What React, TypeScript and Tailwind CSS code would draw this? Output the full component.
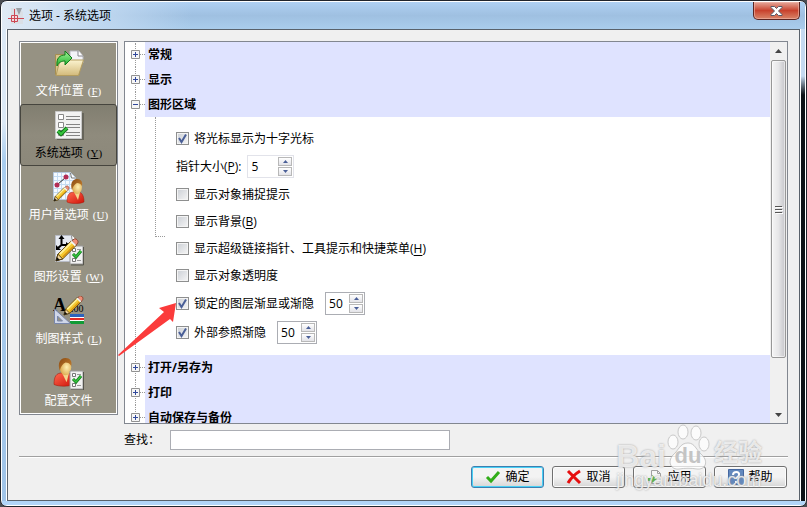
import React, { useState } from 'react';

interface MnemonicProps {
  text: string;
  hotkey?: string;
  suffix?: string;
}

function Mnemonic({ text, hotkey, suffix = '' }: MnemonicProps) {
  return (
    <span>
      {text}
      {hotkey && (
        <>
          (<u className="underline underline-offset-2">{hotkey}</u>)
        </>
      )}
      {suffix}
    </span>
  );
}

/* ---------- Icons ---------- */

function Gradients() {
  return (
    <svg width="0" height="0" className="absolute" aria-hidden="true">
      <defs>
        <linearGradient id="folder" x1="0" y1="0" x2="0" y2="1">
          <stop offset="0" stopColor="#fbf3cf" />
          <stop offset="1" stopColor="#d3ba7a" />
        </linearGradient>
        <linearGradient id="green" x1="0" y1="0" x2="0" y2="1">
          <stop offset="0" stopColor="#a4f59a" />
          <stop offset="1" stopColor="#1cae2a" />
        </linearGradient>
        <radialGradient id="face" cx="0.6" cy="0.5" r="0.6">
          <stop offset="0" stopColor="#fff0b4" />
          <stop offset="1" stopColor="#d9a548" />
        </radialGradient>
        <linearGradient id="hair" x1="0" y1="0" x2="1" y2="1">
          <stop offset="0" stopColor="#8a4a12" />
          <stop offset="1" stopColor="#c98632" />
        </linearGradient>
        <linearGradient id="shirt" x1="0" y1="0" x2="1" y2="1">
          <stop offset="0" stopColor="#ff6a50" />
          <stop offset="1" stopColor="#cf1208" />
        </linearGradient>
      </defs>
    </svg>
  );
}

function Sheet({ x, y }: { x: number; y: number }) {
  return (
    <g transform={`translate(${x} ${y})`}>
      <path d="M0 0h13v18H0z" fill="#f1f1f1" stroke="#9a9a9a" />
      <path d="M13.500 1v18H1" fill="none" stroke="#55544c" />
      <path d="M2.500 2.500h3v3h-3zM2.500 12.500h3v3h-3z" fill="#fff" stroke="#777" />
      <path d="M7 3.500h4M7 14.500h4" stroke="#999" />
      <path d="m3 8 3 3 5-6" fill="none" stroke="#137b20" strokeWidth="3" />
      <path d="m3 8 3 3 5-6" fill="none" stroke="#35c43c" strokeWidth="1.500" />
    </g>
  );
}

function Pencil({ x, y, scale = 1 }: { x: number; y: number; scale?: number }) {
  return (
    <g transform={`translate(${x} ${y}) scale(${scale})`}>
      <path d="M0 23 2 16 16 2l5 5L7 21Z" fill="#f5ca32" stroke="#4f3908" />
      <path d="M4 16 17 3" stroke="#fff09a" strokeWidth="2" />
      <path d="M7 19 19 7" stroke="#d9920f" strokeWidth="1.500" />
      <path d="m0 23 2-7 5 5Z" fill="#f1d5a0" stroke="#4f3908" />
      <path d="m0 23 1-4 3 3Z" fill="#111" />
      <path d="m17 2 2-2c2-1 5 2 4 4l-2 3Z" fill="#ef8f78" stroke="#87402b" />
      <path d="m15 3 5 5 1-2-4-4Z" fill="#f4f4f4" />
    </g>
  );
}

function Person({ x, y, scale = 1 }: { x: number; y: number; scale?: number }) {
  return (
    <g transform={`translate(${x} ${y}) scale(${scale})`}>
      <path d="M0 23c0-7 2-10 7-10h4c4 0 6 4 6 10-4 2-13 2-17 0Z" fill="url(#shirt)" stroke="#a31b0d" strokeWidth="0.5" />
      <path d="m7 13 4 8 2-8Z" fill="#f3d58c" />
      <ellipse cx="10" cy="8" rx="5" ry="7" fill="url(#face)" />
      <path d="M5 11C3 5 5 0 10 0c4 0 6 3 5 7-1-2-3-3-5-3-2 1-4 3-5 7Z" fill="url(#hair)" />
    </g>
  );
}

function FolderIcon() {
  return (
    <svg width="32" height="32" viewBox="0 0 32 32" aria-hidden="true">
      <path d="M2.500 6.500h8l2 2h14v18h-24Z" fill="#d8c48b" stroke="#a58e51" />
      <path d="M17 3h9l4 5v7H17Z" fill="#f4f4f8" stroke="#b9bac0" />
      <path d="M25 3v5h5" fill="#fff" stroke="#85858c" />
      <path d="M3 27.500 7 12h23.500l-5 15.500Z" fill="url(#folder)" stroke="#b39c5e" />
      <path d="M4 18C3 10 7 7 12 7V3l7 7-7 7v-4c-3 0-6 1-8 5Z" fill="url(#green)" stroke="#107a1a" />
    </svg>
  );
}

function ListIcon() {
  return (
    <svg width="32" height="32" viewBox="0 0 32 32" aria-hidden="true">
      <path d="M4 3h27v27H4z" fill="#66645a" />
      <path d="M2.500 1.500h26v27h-26z" fill="#f2f2f2" stroke="#c8c8c8" />
      <path d="M5.500 4.500h5v5h-5zM5.500 12.500h5v5h-5zM5.500 20.500h5v5h-5z" fill="#fff" stroke="#888" />
      <path d="M13 6.500h14M13 9.500h14M13 14.500h14M13 17.500h14M13 22.500h14M13 25.500h14" stroke="#858585" />
      <path d="m5 21 3 3 6-6" fill="none" stroke="#10751b" strokeWidth="4" />
      <path d="m5 21 3 3 6-6" fill="none" stroke="#36c43d" strokeWidth="2" />
    </svg>
  );
}

function UserPrefsIcon() {
  return (
    <svg width="32" height="32" viewBox="0 0 32 32" aria-hidden="true">
      <path d="M.5.500h17l5 5v22H.500Z" fill="#f5faff" stroke="#b6c9df" />
      <path d="M4.500 1v26M8.500 1v26M12.500 1v26M16.500 1v26M1 4.500h17M1 8.500h21M1 12.500h21M1 16.500h21M1 20.500h21" stroke="#c3dbf2" />
      <path d="m17.500 1 1 5h4" fill="#fff" stroke="#777" />
      <path d="m4 13 9-8" stroke="#222" />
      <circle cx="4" cy="13" r="2.500" fill="#b32d55" />
      <circle cx="13" cy="5" r="2.500" fill="#b32d55" />
      <Person x={14} y={7} />
      <Pencil x={1} y={14} scale={0.650} />
    </svg>
  );
}

function DrawingIcon() {
  return (
    <svg width="32" height="32" viewBox="0 0 32 32" aria-hidden="true">
      <path d="M2.500 1.500h16l4 4v22h-20Z" fill="#e6eaf2" stroke="#b8bcc6" />
      <path d="m18.500 1.500.5 4h4" fill="#fff" stroke="#888" />
      <path d="M8.500 4v7M8.500 11 5 14M8.500 11H15" fill="none" stroke="#000" strokeWidth="2" />
      <path d="m5.500 5 3-4 3 4ZM3 11v5h5ZM13 8l4 3-4 3Z" />
      <Sheet x={17} y={12} />
      <Pencil x={3} y={5} scale={0.950} />
    </svg>
  );
}

function StyleIcon() {
  return (
    <svg width="32" height="32" viewBox="0 0 32 32" aria-hidden="true">
      <text x="0" y="15" fontFamily="Liberation Serif, serif" fontSize="18" fontWeight="bold">A</text>
      <text x="18" y="16" fontFamily="Liberation Serif, serif" fontSize="10">.00</text>
      <path d="M17 18h14v3H17z" fill="#2d63bb" />
      <path d="M17 21h14v1H17z" fill="#fff" />
      <path d="M17 22h14v2H17z" fill="#e12b24" />
      <path d="M17 24h14v1H17z" fill="#fff" />
      <path d="M17 25h14v3H17z" fill="#119b35" />
      <path d="M1.500 13v14.500h16Z" fill="#d0d7e9" stroke="#7886aa" />
      <path d="M4.500 20v5h5Z" fill="#969283" stroke="#7886aa" />
      <Pencil x={11} y={0} scale={0.820} />
    </svg>
  );
}

function ProfileIcon() {
  return (
    <svg width="32" height="32" viewBox="0 0 32 32" aria-hidden="true">
      <Person x={1} y={0} scale={1.150} />
      <Sheet x={17} y={13} />
    </svg>
  );
}

const CATEGORIES = [
  { label: '文件位置', hotkey: 'F', icon: <FolderIcon /> },
  { label: '系统选项', hotkey: 'Y', icon: <ListIcon /> },
  { label: '用户首选项', hotkey: 'U', icon: <UserPrefsIcon /> },
  { label: '图形设置', hotkey: 'W', icon: <DrawingIcon /> },
  { label: '制图样式', hotkey: 'L', icon: <StyleIcon /> },
  { label: '配置文件', hotkey: '', icon: <ProfileIcon /> },
];

/* ---------- Controls ---------- */

function Checkbox({ id, checked }: { id: string; checked?: boolean }) {
  return (
    <span className="relative flex size-[13px] shrink-0">
      <input
        id={id}
        type="checkbox"
        defaultChecked={checked}
        className="peer size-[13px] appearance-none border border-[#8e8f8f] bg-linear-to-br from-[#cbcfd5] to-[#f6f6f6] shadow-[inset_0_0_0_1px_#f4f4f4]"
      />
      <svg viewBox="0 0 13 13" className="pointer-events-none absolute inset-0 hidden peer-checked:block" aria-hidden="true">
        <path d="m3 6 2.500 4L10 2.500" fill="none" stroke="#4a5f97" strokeWidth="2" />
      </svg>
    </span>
  );
}

function CheckRow({ id, text, hotkey, checked }: { id: string; text: string; hotkey?: string; checked?: boolean }) {
  return (
    <div className="flex h-[27px] items-center gap-[5px]">
      <Checkbox id={id} checked={checked} />
      <label htmlFor={id}><Mnemonic text={text} hotkey={hotkey} /></label>
    </div>
  );
}

function Spinner({ id, initial, wide, label }: { id: string; initial: number; wide?: boolean; label?: string }) {
  const [value, setValue] = useState(initial);
  return (
    <span className={`flex h-[23px] border bg-white p-px ${wide ? 'w-[47px] border-[#e2e3ea]' : 'w-10 border-[#abadb3]'}`}>
      <input
        id={id}
        aria-label={label}
        type="text"
        inputMode="numeric"
        value={value}
        onChange={(e) => setValue(Number(e.target.value) || 0)}
        className="w-full min-w-0 pl-[2px] outline-none"
      />
      <span className="flex w-[14px] shrink-0 flex-col gap-px">
        <button aria-label="+" onClick={() => setValue(value + 1)} className="flex flex-1 items-center justify-center border border-[#b8b8b8] bg-linear-to-b from-white to-[#e3e3e8]">
          <svg width="5" height="3" viewBox="0 0 5 3"><path d="M0 3 2.500 0 5 3Z" fill="#4a5f97" /></svg>
        </button>
        <button aria-label="-" onClick={() => setValue(value - 1)} className="flex flex-1 items-center justify-center border border-[#b8b8b8] bg-linear-to-b from-white to-[#e3e3e8]">
          <svg width="5" height="3" viewBox="0 0 5 3"><path d="M0 0h5L2.500 3Z" fill="#4a5f97" /></svg>
        </button>
      </span>
    </span>
  );
}

function TreeHeader({ title, open, first }: { title: string; open?: boolean; first?: boolean }) {
  return (
    <div className="flex h-[25px] shrink-0">
      <div className="relative w-5 shrink-0">
        <span className={`absolute bottom-0 left-[10px] border-l border-dotted border-[#9a9a9a] ${first ? 'top-px' : 'top-0'}`} />
        <span className="absolute top-3 right-0 left-[10px] border-t border-dotted border-[#9a9a9a]" />
        <button aria-label={title} aria-expanded={!!open} className="absolute top-2 left-[6px] flex size-[9px]">
          <svg width="9" height="9" viewBox="0 0 9 9">
            <path d="M.5.5h8v8h-8z" fill="#f6f6f6" stroke="#919191" />
            <path d={open ? 'M2 4.500h5' : 'M2 4.500h5M4.500 2v5'} stroke="#31489b" />
          </svg>
        </button>
      </div>
      <h2 className="flex flex-1 items-center bg-[#dfe3ff] pl-[3px] font-bold">{title}</h2>
    </div>
  );
}

function ScrollBar() {
  return (
    <div className="flex w-[17px] shrink-0 flex-col bg-[#f0f0f0] px-px">
      <button aria-label="▲" className="flex h-[18px] items-center justify-center">
        <svg width="7" height="4" viewBox="0 0 7 4"><path d="M0 4 3.500 0 7 4Z" fill="#444" /></svg>
      </button>
      <div className="flex flex-[298] items-center justify-center rounded-[2px] border border-[#979797] bg-linear-to-r from-[#f5f5f5] via-[#e6e6e8] to-[#c6c6ca] shadow-[inset_0_0_0_1px_#ffffff88]">
        <svg width="8" height="9" viewBox="0 0 8 9">
          <path d="M0 1.500h7M0 4.500h7M0 7.500h7" stroke="#555" />
          <path d="M1 2.500h7M1 5.500h7M1 8.500h7" stroke="#fff" />
        </svg>
      </div>
      <div className="flex-[48]" />
      <button aria-label="▼" className="flex h-[17px] items-center justify-center">
        <svg width="7" height="4" viewBox="0 0 7 4"><path d="M0 0h7L3.500 4Z" fill="#444" /></svg>
      </button>
    </div>
  );
}

function ActionButton({ label, primary, children }: { label: string; primary?: boolean; children: React.ReactNode }) {
  return (
    <button
      className={`flex h-[22px] w-[73px] items-center justify-center gap-1 rounded-[3px] border bg-linear-to-b from-[#f3f3f3] from-50% to-[#d6d6d6] to-100% ${
        primary ? 'border-[#3c7fb1] shadow-[inset_0_0_0_1px_#48d0f5]' : 'border-[#707070] shadow-[inset_0_0_0_1px_#fcfcfc]'
      }`}
    >
      {children}
      <span>{label}</span>
    </button>
  );
}

function TitleBar() {
  return (
    <header className="flex h-[27px] shrink-0 items-start justify-between bg-linear-to-b from-[#afd0f3] via-[#9fc0e1] to-[#aacdec]">
      <div className="flex h-full w-[190px] items-center gap-[5px] bg-linear-to-r from-[#e0eaf5] via-[#c0d8f0] to-transparent pl-[6px]">
        <svg width="16" height="18" viewBox="0 0 16 18" aria-hidden="true">
          <path d="M3 1h8l4 4v12H3Z" fill="#d9dde2" opacity=".8" />
          <path d="m8 1 3 7 3-7Z" fill="#9b9fa5" />
          <path d="M6.500 2v14M0 11.500h16" stroke="#cd4754" />
          <path d="M3.500 8.500h6v6h-6z" fill="#efdde2" stroke="#cd4754" />
          <path d="M6.500 8v7M3 11.500h7" stroke="#cd4754" />
        </svg>
        <h1>选项 - 系统选项</h1>
      </div>
      <button
        aria-label="关闭"
        className="mr-[5px] flex h-[18px] w-[47px] items-center justify-center rounded-b-[5px] border border-t-0 border-[#5c2522] bg-linear-to-b from-[#e4a79b] from-0% via-[#c8412d] via-50% to-[#d88368] to-100% shadow-[inset_0_0_0_1px_#f2b9ad99]"
      >
        <svg width="13" height="12" viewBox="0 0 13 12">
          <path d="M1 1.500h3.500l2 2 2-2H12v1L8.500 6 12 9.500v1H8.500l-2-2-2 2H1v-1L4.500 6 1 2.500Z" fill="#fff" stroke="#565a68" />
        </svg>
      </button>
    </header>
  );
}

function Watermark() {
  return (
    <div className="pointer-events-none absolute right-[44px] bottom-[16px] flex flex-col text-white/75 [text-shadow:0_0_2px_#999]">
      <div className="flex h-[46px] items-end">
        <span className="font-[Liberation_Sans] text-[32px] leading-7 font-bold">Bai</span>
        <span className="relative flex h-[46px] w-[44px] items-end justify-center">
          <svg width="44" height="46" viewBox="0 0 44 46" className="absolute inset-0" aria-hidden="true">
            <g fill="#fff" fillOpacity=".75" stroke="#aaa" strokeOpacity=".6">
              <ellipse cx="7" cy="18" rx="5" ry="7" />
              <ellipse cx="17" cy="8" rx="5" ry="7" />
              <ellipse cx="30" cy="9" rx="5" ry="7" />
              <ellipse cx="38" cy="20" rx="5" ry="7" />
              <path d="M22 19c7 0 8 7 14 12 7 7 3 15-5 14-6-1-12-1-18 0-8 1-12-7-6-14 6-5 7-12 15-12Z" />
            </g>
          </svg>
          <span className="relative pb-1 font-[Liberation_Sans] text-[22px] leading-5 font-bold text-[#c4c4c4] [text-shadow:none]">du</span>
        </span>
        <span className="pl-1 text-[24px] leading-[36px] font-bold">经验</span>
      </div>
      <span className="font-[Liberation_Sans] text-[18px] leading-5">jingyan.baidu.com</span>
    </div>
  );
}

export default function App() {
  const [active, setActive] = useState(1);

  return (
    <div className="h-screen bg-[#4b4d52] font-['Open_Sans','Noto_Sans_CJK_SC',sans-serif] text-xs leading-4 text-black">
      <div className="relative flex h-full flex-col overflow-hidden rounded-[7px] border border-[#20242c] bg-white p-px">
        <Gradients />
        <TitleBar />
        <div className="flex min-h-0 flex-1">
          <div className="w-1 shrink-0 bg-linear-to-b from-[#dce9f6] from-20% via-[#a9cdef] via-28% to-[#a0c4e8]" />

          {/* Client area */}
          <main className="mx-px flex min-w-0 flex-1 flex-col border border-[#5a626b] bg-[#f0f0f0] px-[11px] pt-[11px] pb-3">
            <div className="flex min-h-0 flex-1 gap-[6px]">
              {/* Category list */}
              <nav className="flex w-[99px] shrink-0 flex-col self-start border border-[#828790] bg-[#969283] shadow-[inset_0_0_0_1px_#fff]">
                {CATEGORIES.map((item, idx) => (
                  <button
                    key={item.label}
                    onClick={() => setActive(idx)}
                    className={`flex h-[62px] flex-col items-center border pt-[5px] font-['Liberation_Serif','Noto_Sans_CJK_SC',serif] ${
                      active === idx
                        ? 'rounded-[3px] border-[#46453e] bg-linear-to-b from-[#817e70] via-[#8f8b7d] to-[#8c887a] text-black'
                        : 'border-transparent text-white'
                    }`}
                  >
                    {item.icon}
                    <span className="flex gap-1 pt-px leading-5">
                      {item.label}
                      {item.hotkey && <span className="text-[11px]">(<u>{item.hotkey}</u>)</span>}
                    </span>
                  </button>
                ))}
              </nav>

              {/* Option tree */}
              <section className="relative flex min-w-0 flex-1 border border-[#828790] bg-white">
                <div className="flex min-w-0 flex-1 flex-col overflow-hidden">
                  <TreeHeader title="常规" first />
                  <TreeHeader title="显示" />
                  <TreeHeader title="图形区域" open />
                  <div className="flex shrink-0">
                    <div className="ml-[10px] w-5 border-l border-dotted border-[#9a9a9a]" />
                    <div className="h-[120px] w-[10px] border-b border-l border-dotted border-[#9a9a9a]" />
                    <div className="flex flex-col py-2 pl-[11px] whitespace-nowrap">
                      <CheckRow id="crosshair" text="将光标显示为十字光标" checked />
                      <div className="flex h-[29px] items-center gap-[6px]">
                        <label htmlFor="pointer-size"><Mnemonic text="指针大小" hotkey="P" suffix=":" /></label>
                        <Spinner id="pointer-size" initial={5} wide />
                      </div>
                      <CheckRow id="snap-tips" text="显示对象捕捉提示" />
                      <CheckRow id="background" text="显示背景" hotkey="B" />
                      <CheckRow id="hyperlink" text="显示超级链接指针、工具提示和快捷菜单" hotkey="H" />
                      <CheckRow id="transparency" text="显示对象透明度" />
                      <div className="flex h-[29px] items-center gap-[11px]">
                        <CheckRow id="locked-fade" text="锁定的图层渐显或渐隐" checked />
                        <Spinner id="locked-fade-value" label="锁定的图层渐显或渐隐" initial={50} />
                      </div>
                      <div className="flex h-[29px] items-center gap-[11px]">
                        <CheckRow id="xref-fade" text="外部参照渐隐" checked />
                        <Spinner id="xref-fade-value" label="外部参照渐隐" initial={50} />
                      </div>
                    </div>
                  </div>
                  <TreeHeader title="打开/另存为" />
                  <TreeHeader title="打印" />
                  <TreeHeader title="自动保存与备份" />
                </div>
                <ScrollBar />

                {/* Callout arrow */}
                <svg width="60" height="56" viewBox="0 0 60 56" className="pointer-events-none absolute top-[260px] -left-[7px]" aria-hidden="true">
                  <path d="M58 1 41 6l5 4L0 53l1 1 51-37 3 3Z" fill="#fb3b3b" />
                </svg>
              </section>
            </div>

            {/* Search */}
            <div className="mt-[6px] flex shrink-0 items-center pl-[105px]">
              <label htmlFor="find" className="w-[46px]">查找：</label>
              <input id="find" type="text" className="h-5 w-[280px] border border-[#abadb3] bg-white px-1 outline-none" />
            </div>
            <hr className="mt-[6px] shrink-0 border-t border-b border-t-[#a0a0a0] border-b-white" />

            {/* Actions */}
            <div className="mt-2 flex shrink-0 justify-end gap-2 pr-px">
              <ActionButton label="确定" primary>
                <svg width="16" height="16" viewBox="0 0 16 16"><path d="m2 8 4 4 8-9" fill="none" stroke="#31ad19" strokeWidth="3" /></svg>
              </ActionButton>
              <ActionButton label="取消">
                <svg width="16" height="16" viewBox="0 0 16 16"><path d="m2 2 12 12M14 2C9 5 5 9 2 14" fill="none" stroke="#e60f0f" strokeWidth="3" /></svg>
              </ActionButton>
              <ActionButton label="应用">
                <svg width="16" height="16" viewBox="0 0 16 16">
                  <path d="M4.500 1.500h6l3 3v10h-9z" fill="#f7f7f7" stroke="#a0a0a0" />
                  <path d="M10.500 1.500v3h3" fill="none" stroke="#a0a0a0" />
                  <path d="M1 9h4V6l5 4-5 4v-2H1Z" fill="#55b648" />
                </svg>
              </ActionButton>
              <ActionButton label="帮助">
                <svg width="16" height="16" viewBox="0 0 16 16">
                  <path d="M.5.5h15v15H.5z" fill="#6288bd" stroke="#4668a0" />
                  <path d="M5 6c0-4 7-4 6 0 0 2-3 2-3 4M8 12v2" fill="none" stroke="#fff" strokeWidth="2" />
                </svg>
              </ActionButton>
            </div>
          </main>

          <div className="w-1 shrink-0 bg-linear-to-b from-[#c5daf0] from-10% via-[#0c1116] via-14% to-[#0c1116] to-84%" />
        </div>
        <div className="h-1 shrink-0 bg-[#b2d5f8]" />
        <Watermark />
      </div>
    </div>
  );
}
